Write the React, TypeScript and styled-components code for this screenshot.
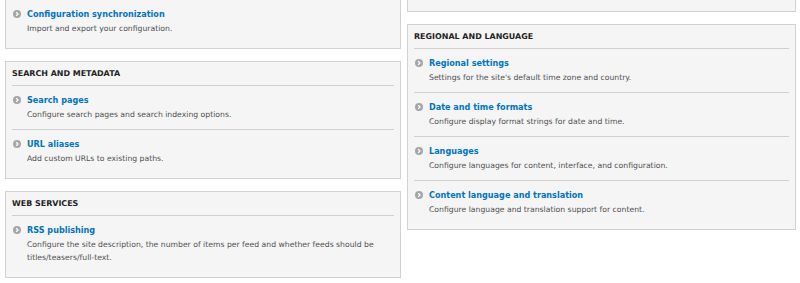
import styled, { createGlobalStyle } from "styled-components";

type Item = { title: string; description: string };

const regional: Item[] = [
  {
    title: "Regional settings",
    description: "Settings for the site's default time zone and country.",
  },
  {
    title: "Date and time formats",
    description: "Configure display format strings for date and time.",
  },
  {
    title: "Languages",
    description: "Configure languages for content, interface, and configuration.",
  },
  {
    title: "Content language and translation",
    description: "Configure language and translation support for content.",
  },
];

const search: Item[] = [
  {
    title: "Search pages",
    description: "Configure search pages and search indexing options.",
  },
  {
    title: "URL aliases",
    description: "Add custom URLs to existing paths.",
  },
];

const webServices: Item[] = [
  {
    title: "RSS publishing",
    description:
      "Configure the site description, the number of items per feed and whether feeds should be titles/teasers/full-text.",
  },
];

const GlobalStyle = createGlobalStyle`
  html, body {
    margin: 0;
    padding: 0;
    background: #ffffff;
    font-family: "DejaVu Sans", "Liberation Sans", sans-serif;
  }
`;

const Page = styled.div`
  display: grid;
  grid-template-columns: 396px 389px;
  column-gap: 6px;
  align-items: start;
  padding-left: 5px;
`;

const Column = styled.div`
  display: flex;
  flex-direction: column;
  gap: 12px;
`;

const Panel = styled.section<{ $cut?: boolean }>`
  background: #f5f5f5;
  border: 1px solid #d2d2d2;
  border-top: ${(p) => (p.$cut ? "none" : "1px solid #d2d2d2")};
  padding: ${(p) => (p.$cut ? "0 6px 5px" : "5px 6px 5px")};
`;

const Stub = styled.div`
  height: 11px;
  background: #f5f5f5;
  border: 1px solid #d2d2d2;
  border-top: none;
`;

const Heading = styled.h3`
  margin: 0;
  padding: 0.5px 0 5.5px;
  border-bottom: 1px solid #cfcfcf;
  font-size: 7.95px;
  line-height: 12px;
  font-weight: bold;
  text-transform: uppercase;
  color: #222222;
`;

const List = styled.div`
  display: flex;
  flex-direction: column;
`;

const Row = styled.div<{ $first?: boolean }>`
  display: grid;
  grid-template-columns: 15px 1fr;
  padding: 8px 0 8.5px;
  border-top: ${(p) => (p.$first ? "none" : "1px solid #cfcfcf")};
`;

const Icon = styled.span`
  display: flex;
  align-items: center;
  height: 12px;
  padding-left: 1px;
`;

const Title = styled.a`
  display: block;
  font-size: 8.1px;
  line-height: 12px;
  font-weight: bold;
  color: #0074bd;
  text-decoration: none;
`;

const Description = styled.div`
  grid-column: 2;
  margin-top: 1.5px;
  font-size: 7.7px;
  line-height: 13px;
  color: #505050;
`;

const Arrow = () => (
  <svg width="8" height="8" viewBox="0 0 16 16">
    <circle cx="8" cy="8" r="8" fill="#a6a6a6" />
    <polyline
      points="6.3,4.3 10,8 6.3,11.7"
      fill="none"
      stroke="#ffffff"
      strokeWidth="2.6"
    />
  </svg>
);

const Items = ({ items, first }: { items: Item[]; first?: boolean }) => (
  <List>
    {items.map((item, i) => (
      <Row key={item.title} $first={i === 0 && first}>
        <Icon>
          <Arrow />
        </Icon>
        <Title href="#">{item.title}</Title>
        <Description>{item.description}</Description>
      </Row>
    ))}
  </List>
);

const App = () => {
  return (
    <>
      <GlobalStyle />
      <Page>
        <Column>
          <Panel $cut>
            <Items
              first
              items={[
                {
                  title: "Configuration synchronization",
                  description: "Import and export your configuration.",
                },
              ]}
            />
          </Panel>
          <Panel>
            <Heading>Search and metadata</Heading>
            <Items first items={search} />
          </Panel>
          <Panel>
            <Heading>Web services</Heading>
            <Items first items={webServices} />
          </Panel>
        </Column>
        <Column>
          <Stub />
          <Panel>
            <Heading>Regional and language</Heading>
            <Items first items={regional} />
          </Panel>
        </Column>
      </Page>
    </>
  );
};

export default App;
